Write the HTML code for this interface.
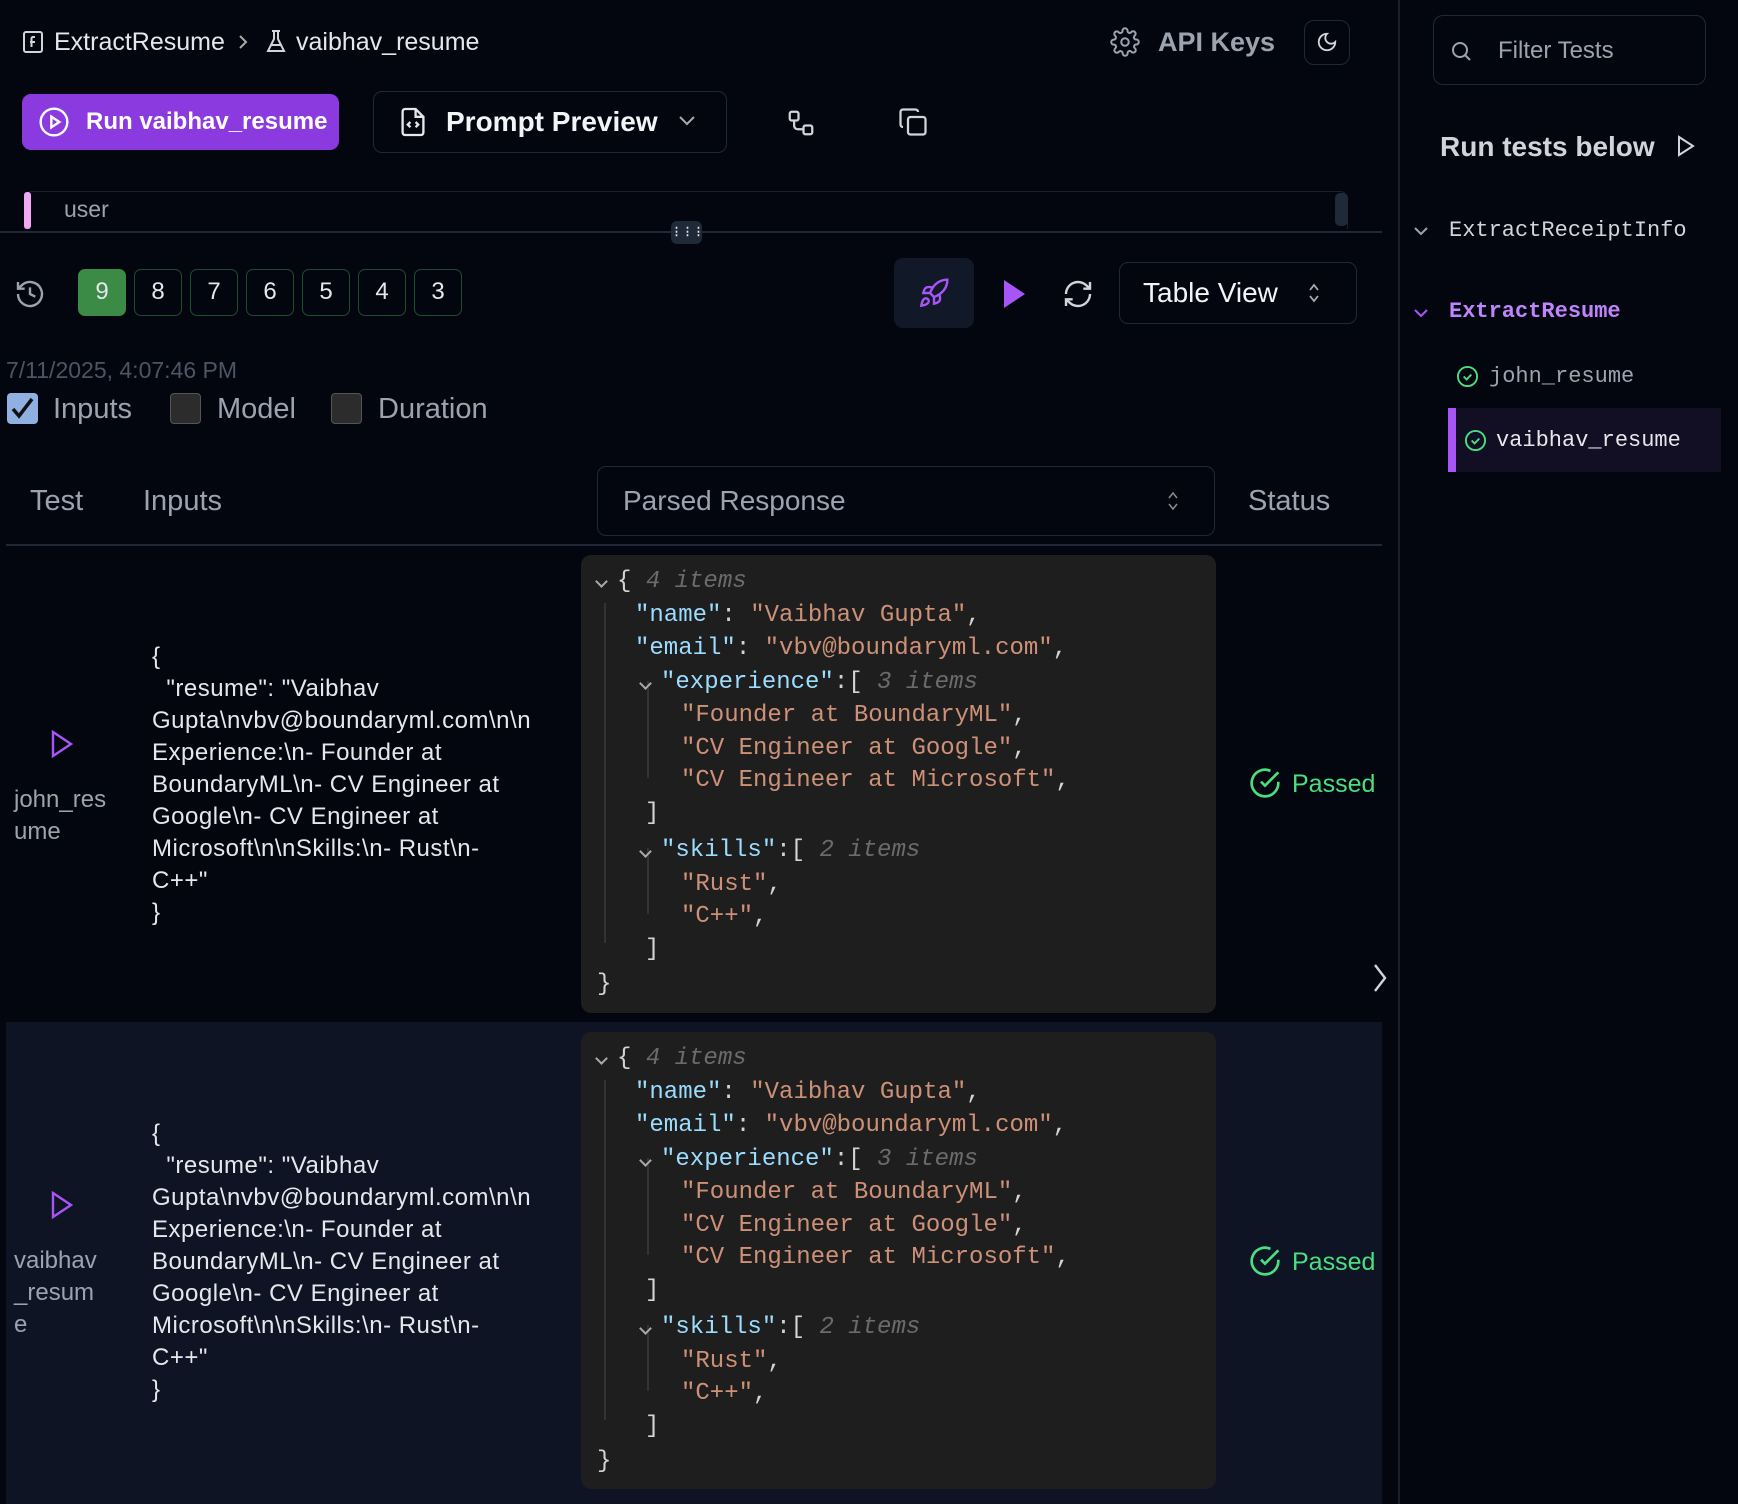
<!DOCTYPE html>
<html><head><meta charset="utf-8"><style>
*{margin:0;padding:0;box-sizing:border-box}
body{width:1738px;height:1504px;background:#04060f;font-family:"Liberation Sans",sans-serif;color:#d1d5db;position:relative;overflow:hidden}
.a{position:absolute;white-space:nowrap}
.mono{font-family:"Liberation Mono",monospace}
.num{position:absolute;top:269px;width:48px;height:47px;border:1.5px solid #1f4d2a;border-radius:7px;color:#e5e7eb;font-size:24px;text-align:center;line-height:44px}
.json{position:absolute;left:581px;width:635px;background:#1e1e1e;border-radius:10px;font-family:"Liberation Mono",monospace;font-size:24px;color:#d4d4d4}
.json .l{position:absolute;height:33.6px;line-height:33.6px;white-space:pre}
.k{color:#9cdcfe}.s{color:#ce9178}.i{color:#6b6b6b;font-style:italic}
.cv{position:absolute;width:9px;height:9px;border-right:2px solid #aaa;border-bottom:2px solid #aaa;transform:rotate(45deg)}
.inp{position:absolute;left:152px;font-size:24px;letter-spacing:0.5px;line-height:32px;color:#e5e7eb;white-space:pre}
</style></head><body>

<!-- breadcrumb -->
<svg class="a" style="left:22px;top:30px" width="22" height="24" viewBox="0 0 22 24" fill="none" stroke="#d1d5db" stroke-width="2"><rect x="2" y="2" width="18" height="20" rx="2"/><path d="M13 7h-2a1.5 1.5 0 0 0-1.5 1.5V17M8 12h5"/></svg>
<div class="a" style="left:54px;top:28px;font-size:25px;color:#e5e7eb">ExtractResume</div>
<svg class="a" style="left:238px;top:34px" width="10" height="16" fill="none" stroke="#aaa" stroke-width="2"><path d="M2 2l6 6-6 6"/></svg>
<svg class="a" style="left:265px;top:29px" width="22" height="26" fill="none" stroke="#d1d5db" stroke-width="2"><path d="M7 2h8M9 2v8L3 22h16L13 10V2M6 16h10"/></svg>
<div class="a" style="left:296px;top:28px;font-size:25px;color:#e5e7eb">vaibhav_resume</div>

<svg class="a" style="left:1110px;top:27px" width="30" height="30" viewBox="0 0 24 24" fill="none" stroke="#9ca3af" stroke-width="1.6"><circle cx="12" cy="12" r="3"/><path d="M19.4 15a1.7 1.7 0 0 0 .3 1.8l.1.1a2 2 0 1 1-2.8 2.8l-.1-.1a1.7 1.7 0 0 0-1.8-.3 1.7 1.7 0 0 0-1 1.5V21a2 2 0 1 1-4 0v-.1a1.7 1.7 0 0 0-1.1-1.5 1.7 1.7 0 0 0-1.8.3l-.1.1a2 2 0 1 1-2.8-2.8l.1-.1a1.7 1.7 0 0 0 .3-1.8 1.7 1.7 0 0 0-1.5-1H3a2 2 0 1 1 0-4h.1a1.7 1.7 0 0 0 1.5-1.1 1.7 1.7 0 0 0-.3-1.8l-.1-.1a2 2 0 1 1 2.8-2.8l.1.1a1.7 1.7 0 0 0 1.8.3H9a1.7 1.7 0 0 0 1-1.5V3a2 2 0 1 1 4 0v.1a1.7 1.7 0 0 0 1 1.5 1.7 1.7 0 0 0 1.8-.3l.1-.1a2 2 0 1 1 2.8 2.8l-.1.1a1.7 1.7 0 0 0-.3 1.8V9a1.7 1.7 0 0 0 1.5 1H21a2 2 0 1 1 0 4h-.1a1.7 1.7 0 0 0-1.5 1z"/></svg>
<div class="a" style="left:1158px;top:27px;font-size:27px;color:#9ca3af;font-weight:bold">API Keys</div>
<div class="a" style="left:1304px;top:20px;width:46px;height:45px;border:1.5px solid #1f2937;border-radius:10px"></div>
<svg class="a" style="left:1316px;top:31px" width="22" height="22" viewBox="0 0 24 24" fill="none" stroke="#d1d5db" stroke-width="2"><path d="M12 3a6 6 0 0 0 9 9 9 9 0 1 1-9-9z"/></svg>

<!-- action row -->
<div class="a" style="left:22px;top:94px;width:317px;height:56px;background:#8b3ae0;border-radius:9px"></div>
<svg class="a" style="left:38px;top:106px" width="32" height="32" viewBox="0 0 24 24" fill="none" stroke="#fff" stroke-width="1.8"><circle cx="12" cy="12" r="10"/><path d="M10 8l6 4-6 4z"/></svg>
<div class="a" style="left:86px;top:108px;font-size:24px;color:#fff;font-weight:bold">Run vaibhav_resume</div>
<div class="a" style="left:373px;top:91px;width:354px;height:62px;border:1.5px solid #1f2937;border-radius:9px"></div>
<svg class="a" style="left:400px;top:106px" width="26" height="32" viewBox="0 0 20 24" fill="none" stroke="#e5e7eb" stroke-width="1.8"><path d="M12 2H4a2 2 0 0 0-2 2v16a2 2 0 0 0 2 2h12a2 2 0 0 0 2-2V8z"/><path d="M12 2v6h6M8 12l-2 2 2 2M12 12l2 2-2 2"/></svg>
<div class="a" style="left:446px;top:106px;font-size:28px;color:#f3f4f6;font-weight:bold">Prompt Preview</div>
<svg class="a" style="left:678px;top:115px" width="18" height="12" fill="none" stroke="#aaa" stroke-width="2"><path d="M2 2l7 7 7-7"/></svg>
<svg class="a" style="left:786px;top:108px" width="30" height="30" viewBox="0 0 24 24" fill="none" stroke="#d1d5db" stroke-width="1.8"><rect x="3" y="3" width="7" height="7" rx="1.5"/><rect x="14" y="14" width="7" height="7" rx="1.5"/><path d="M6.5 10v4a3 3 0 0 0 3 3H14"/></svg>
<svg class="a" style="left:898px;top:107px" width="30" height="30" viewBox="0 0 24 24" fill="none" stroke="#d1d5db" stroke-width="1.8"><rect x="8" y="8" width="14" height="14" rx="2"/><path d="M4 16a2 2 0 0 1-2-2V4a2 2 0 0 1 2-2h10a2 2 0 0 1 2 2"/></svg>

<!-- user bar -->
<div class="a" style="left:24px;top:191px;width:1324px;height:38px;border:1.5px solid #1a2030;border-bottom:none;border-radius:8px 8px 0 0"></div>
<div class="a" style="left:24px;top:192px;width:7px;height:37px;background:#f0a8f0;border-radius:3px"></div>
<div class="a" style="left:64px;top:196px;font-size:23px;color:#9ca3af">user</div>
<div class="a" style="left:1335px;top:193px;width:13px;height:33px;background:#1f2937;border-radius:5px"></div>
<div class="a" style="left:0;top:231px;width:1382px;height:2px;background:#1f2937"></div>
<div class="a" style="left:671px;top:221px;width:31px;height:23px;background:#1f2937;border-radius:6px;color:#e5e7eb;font-size:11px;text-align:center;line-height:22px;font-weight:bold">⋮⋮⋮</div>

<!-- versions -->
<svg class="a" style="left:14px;top:278px" width="32" height="32" viewBox="0 0 24 24" fill="none" stroke="#9ca3af" stroke-width="1.8"><path d="M3 12a9 9 0 1 0 3-6.7L3 8"/><path d="M3 3v5h5M12 7v5l4 2"/></svg>
<div class="num" style="left:78px;background:#3b8a45;border-color:#3b8a45">9</div>
<div class="num" style="left:134px">8</div>
<div class="num" style="left:190px">7</div>
<div class="num" style="left:246px">6</div>
<div class="num" style="left:302px">5</div>
<div class="num" style="left:358px">4</div>
<div class="num" style="left:414px">3</div>

<div class="a" style="left:894px;top:258px;width:80px;height:70px;background:#111827;border-radius:9px"></div>
<svg class="a" style="left:918px;top:277px" width="32" height="32" viewBox="0 0 24 24" fill="none" stroke="#a855f7" stroke-width="1.8"><path d="M4.5 16.5c-1.5 1.3-2 5-2 5s3.7-.5 5-2c.7-.8.7-2.1-.1-2.9a2.2 2.2 0 0 0-2.9-.1zM12 15l-3-3a22 22 0 0 1 2-3.9A12.9 12.9 0 0 1 22 2c0 2.7-.8 7.5-6 11a22.4 22.4 0 0 1-4 2z"/><path d="M9 12H4s.6-3 2-4c1.6-1.1 5 0 5 0M12 15v5s3-.6 4-2c1.1-1.6 0-5 0-5"/></svg>
<svg class="a" style="left:1002px;top:279px" width="24" height="30"><path d="M2 1l21 14L2 29z" fill="#a855f7"/></svg>
<svg class="a" style="left:1062px;top:278px" width="32" height="32" viewBox="0 0 24 24" fill="none" stroke="#d1d5db" stroke-width="1.8"><path d="M3 12a9 9 0 0 1 15-6.7L21 8M21 3v5h-5M21 12a9 9 0 0 1-15 6.7L3 16M3 21v-5h5"/></svg>
<div class="a" style="left:1119px;top:262px;width:238px;height:62px;border:1.5px solid #1f2937;border-radius:9px"></div>
<div class="a" style="left:1143px;top:277px;font-size:28px;color:#f3f4f6">Table View</div>
<svg class="a" style="left:1307px;top:281px" width="14" height="24" fill="none" stroke="#aaa" stroke-width="1.8"><path d="M3 9l4-5 4 5M3 15l4 5 4-5"/></svg>

<div class="a" style="left:6px;top:357px;font-size:23px;color:#4b5563">7/11/2025, 4:07:46 PM</div>
<div class="a" style="left:7px;top:393px;width:31px;height:31px;background:#8fb0e0;border-radius:4px"></div>
<svg class="a" style="left:9px;top:396px" width="26" height="26" fill="none" stroke="#111" stroke-width="3.5"><path d="M4 13l6 7 13-17"/></svg>
<div class="a" style="left:53px;top:393px;font-size:29px;color:#9ca3af">Inputs</div>
<div class="a" style="left:170px;top:393px;width:31px;height:31px;background:#2c2c2c;border:1.5px solid #555;border-radius:4px"></div>
<div class="a" style="left:217px;top:393px;font-size:29px;color:#9ca3af">Model</div>
<div class="a" style="left:331px;top:393px;width:31px;height:31px;background:#2c2c2c;border:1.5px solid #555;border-radius:4px"></div>
<div class="a" style="left:378px;top:393px;font-size:29px;color:#9ca3af">Duration</div>

<!-- table header -->
<div class="a" style="left:30px;top:485px;font-size:29px;color:#9ca3af">Test</div>
<div class="a" style="left:143px;top:485px;font-size:29px;color:#9ca3af">Inputs</div>
<div class="a" style="left:597px;top:466px;width:618px;height:70px;border:1.5px solid #1f2937;border-radius:9px"></div>
<div class="a" style="left:623px;top:485px;font-size:28px;color:#9ca3af">Parsed Response</div>
<svg class="a" style="left:1166px;top:489px" width="14" height="24" fill="none" stroke="#888" stroke-width="1.6"><path d="M3 9l4-5 4 5M3 15l4 5 4-5"/></svg>
<div class="a" style="left:1248px;top:485px;font-size:29px;color:#9ca3af">Status</div>
<div class="a" style="left:6px;top:544px;width:1376px;height:2px;background:#1f2937"></div>

<!-- row 2 bg -->
<div class="a" style="left:6px;top:1022px;width:1376px;height:482px;background:#0e1424"></div>

<!-- row 1 -->
<svg class="a" style="left:50px;top:729px" width="24" height="30" fill="none" stroke="#a855f7" stroke-width="2.4"><path d="M3 3l18 12L3 27z"/></svg>
<div class="a" style="left:14px;top:784px;font-size:24px;line-height:32px;color:#9ca3af;white-space:pre">john_res
ume</div>
<div class="inp" style="top:641px">{
  "resume": "Vaibhav
Gupta\nvbv@boundaryml.com\n\n
Experience:\n- Founder at
BoundaryML\n- CV Engineer at
Google\n- CV Engineer at
Microsoft\n\nSkills:\n- Rust\n-
C++"
}</div>

<div class="json" style="top:555px;height:458px">
 <div class="a" style="left:23px;top:48px;width:2px;height:340px;background:#333"></div>
 <div class="a" style="left:66px;top:126px;width:2px;height:97px;background:#333"></div>
 <div class="a" style="left:66px;top:293px;width:2px;height:66px;background:#333"></div>
 <i class="cv" style="left:16px;top:22px"></i>
 <div class="l" style="left:36px;top:10px">{ <span class="i">4 items</span></div>
 <div class="l" style="left:54px;top:44px"><span class="k">"name"</span>: <span class="s">"Vaibhav Gupta"</span>,</div>
 <div class="l" style="left:54px;top:77px"><span class="k">"email"</span>: <span class="s">"vbv@boundaryml.com"</span>,</div>
 <i class="cv" style="left:60px;top:124px"></i>
 <div class="l" style="left:80px;top:111px"><span class="k">"experience"</span>:[ <span class="i">3 items</span></div>
 <div class="l" style="left:100px;top:144px"><span class="s">"Founder at BoundaryML"</span>,</div>
 <div class="l" style="left:100px;top:177px"><span class="s">"CV Engineer at Google"</span>,</div>
 <div class="l" style="left:100px;top:209px"><span class="s">"CV Engineer at Microsoft"</span>,</div>
 <div class="l" style="left:64px;top:242px">]</div>
 <i class="cv" style="left:60px;top:292px"></i>
 <div class="l" style="left:80px;top:279px"><span class="k">"skills"</span>:[ <span class="i">2 items</span></div>
 <div class="l" style="left:100px;top:313px"><span class="s">"Rust"</span>,</div>
 <div class="l" style="left:100px;top:345px"><span class="s">"C++"</span>,</div>
 <div class="l" style="left:64px;top:378px">]</div>
 <div class="l" style="left:16px;top:413px">}</div>
</div>
<svg class="a" style="left:1249px;top:767px" width="32" height="32" viewBox="0 0 24 24" fill="none" stroke="#4ade80" stroke-width="2"><path d="M22 11.1V12a10 10 0 1 1-5.9-9.1"/><path d="M22 4L12 14l-3-3"/></svg>
<div class="a" style="left:1292px;top:770px;font-size:25px;color:#4ade80">Passed</div>
<svg class="a" style="left:1372px;top:962px" width="16" height="32" fill="none" stroke="#d1d5db" stroke-width="2.4"><path d="M3 3l10 13L3 29"/></svg>

<!-- row 2 -->
<svg class="a" style="left:50px;top:1190px" width="24" height="30" fill="none" stroke="#a855f7" stroke-width="2.4"><path d="M3 3l18 12L3 27z"/></svg>
<div class="a" style="left:14px;top:1245px;font-size:24px;line-height:32px;color:#9ca3af;white-space:pre">vaibhav
_resum
e</div>
<div class="inp" style="top:1118px">{
  "resume": "Vaibhav
Gupta\nvbv@boundaryml.com\n\n
Experience:\n- Founder at
BoundaryML\n- CV Engineer at
Google\n- CV Engineer at
Microsoft\n\nSkills:\n- Rust\n-
C++"
}</div>
<div class="json" style="top:1032px;height:457px">
 <div class="a" style="left:23px;top:48px;width:2px;height:340px;background:#333"></div>
 <div class="a" style="left:66px;top:126px;width:2px;height:97px;background:#333"></div>
 <div class="a" style="left:66px;top:293px;width:2px;height:66px;background:#333"></div>
 <i class="cv" style="left:16px;top:22px"></i>
 <div class="l" style="left:36px;top:10px">{ <span class="i">4 items</span></div>
 <div class="l" style="left:54px;top:44px"><span class="k">"name"</span>: <span class="s">"Vaibhav Gupta"</span>,</div>
 <div class="l" style="left:54px;top:77px"><span class="k">"email"</span>: <span class="s">"vbv@boundaryml.com"</span>,</div>
 <i class="cv" style="left:60px;top:124px"></i>
 <div class="l" style="left:80px;top:111px"><span class="k">"experience"</span>:[ <span class="i">3 items</span></div>
 <div class="l" style="left:100px;top:144px"><span class="s">"Founder at BoundaryML"</span>,</div>
 <div class="l" style="left:100px;top:177px"><span class="s">"CV Engineer at Google"</span>,</div>
 <div class="l" style="left:100px;top:209px"><span class="s">"CV Engineer at Microsoft"</span>,</div>
 <div class="l" style="left:64px;top:242px">]</div>
 <i class="cv" style="left:60px;top:292px"></i>
 <div class="l" style="left:80px;top:279px"><span class="k">"skills"</span>:[ <span class="i">2 items</span></div>
 <div class="l" style="left:100px;top:313px"><span class="s">"Rust"</span>,</div>
 <div class="l" style="left:100px;top:345px"><span class="s">"C++"</span>,</div>
 <div class="l" style="left:64px;top:378px">]</div>
 <div class="l" style="left:16px;top:413px">}</div>
</div>
<svg class="a" style="left:1249px;top:1245px" width="32" height="32" viewBox="0 0 24 24" fill="none" stroke="#4ade80" stroke-width="2"><path d="M22 11.1V12a10 10 0 1 1-5.9-9.1"/><path d="M22 4L12 14l-3-3"/></svg>
<div class="a" style="left:1292px;top:1248px;font-size:25px;color:#4ade80">Passed</div>

<!-- sidebar -->
<div class="a" style="left:1398px;top:0;width:2px;height:1504px;background:#1a1f2b"></div>
<div class="a" style="left:1433px;top:15px;width:273px;height:70px;border:1.5px solid #1f2937;border-radius:10px"></div>
<svg class="a" style="left:1449px;top:39px" width="24" height="24" viewBox="0 0 24 24" fill="none" stroke="#9ca3af" stroke-width="2"><circle cx="11" cy="11" r="7"/><path d="M21 21l-5-5"/></svg>
<div class="a" style="left:1498px;top:37px;font-size:24px;color:#9ca3af">Filter Tests</div>
<div class="a" style="left:1440px;top:131px;font-size:28px;color:#d1d5db;font-weight:bold">Run tests below</div>
<svg class="a" style="left:1676px;top:134px" width="20" height="24" fill="none" stroke="#d1d5db" stroke-width="2"><path d="M3 3l14 9-14 9z"/></svg>
<svg class="a" style="left:1413px;top:226px" width="16" height="10" fill="none" stroke="#9ca3af" stroke-width="2"><path d="M2 2l6 6 6-6"/></svg>
<div class="a mono" style="left:1449px;top:218px;font-size:22px;color:#d1d5db">ExtractReceiptInfo</div>
<svg class="a" style="left:1413px;top:308px" width="16" height="10" fill="none" stroke="#a855f7" stroke-width="2"><path d="M2 2l6 6 6-6"/></svg>
<div class="a mono" style="left:1449px;top:299px;font-size:22px;color:#c084fc;font-weight:bold">ExtractResume</div>
<svg class="a" style="left:1456px;top:365px" width="23" height="23" viewBox="0 0 24 24" fill="none" stroke="#4ade80" stroke-width="2"><circle cx="12" cy="12" r="10"/><path d="M8 12l3 3 5-5"/></svg>
<div class="a mono" style="left:1489px;top:364px;font-size:22px;color:#9ca3af">john_resume</div>
<div class="a" style="left:1448px;top:408px;width:273px;height:64px;background:#120f24"></div>
<div class="a" style="left:1448px;top:408px;width:8px;height:64px;background:#a855f7"></div>
<svg class="a" style="left:1464px;top:429px" width="23" height="23" viewBox="0 0 24 24" fill="none" stroke="#4ade80" stroke-width="2"><circle cx="12" cy="12" r="10"/><path d="M8 12l3 3 5-5"/></svg>
<div class="a mono" style="left:1496px;top:428px;font-size:22px;color:#e5e7eb">vaibhav_resume</div>
</body></html>
